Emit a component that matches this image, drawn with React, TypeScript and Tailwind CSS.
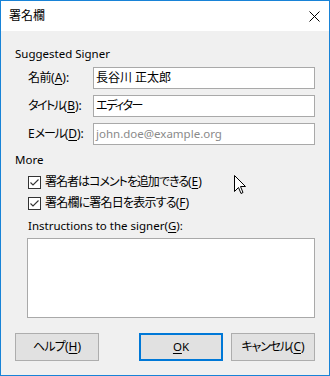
import React from "react";

const F = { fontFamily: '"Noto Sans", "Noto Sans CJK JP", sans-serif' };

function U({ c }: { c: string }) {
  return <span className="underline underline-offset-[2px]">{c}</span>;
}

function J({ children, t = "" }: { children: React.ReactNode; t?: string }) {
  return <span className={"[font-feature-settings:'palt'] " + t}>{children}</span>;
}

function Check() {
  return (
    <svg width="13" height="13" viewBox="0 0 13 13" className="shrink-0">
      <rect x="0.5" y="0.5" width="12" height="12" fill="#fff" stroke="#333" />
      <path d="M2.5 6.5 L5 9 L10.5 3.5" fill="none" stroke="#333" strokeWidth="1.1" />
    </svg>
  );
}

function Row({ label, children }: { label: React.ReactNode; children: React.ReactNode }) {
  return (
    <div className="flex items-center h-[22px]">
      <div className="w-[78px] pl-[13px] text-[12px] whitespace-nowrap text-black">{label}</div>
      {children}
    </div>
  );
}

export default function App() {
  return (
    <div
      className="w-[330px] h-[376px] border border-[#1883d7] bg-[#f0f0f0] flex flex-col relative text-[12px] leading-[16px] text-black"
      style={F}
    >
      <div className="h-[30px] bg-white flex items-center justify-between pl-[8px] pr-[9px] shrink-0">
        <span className="text-[12px] text-black">署名欄</span>
        <svg width="11" height="11" viewBox="0 0 11 11">
          <path d="M0.5 0.5 L10.5 10.5 M10.5 0.5 L0.5 10.5" stroke="#000" strokeWidth="1" />
        </svg>
      </div>
      <div className="flex flex-col pl-[14px] pr-[14px]">
        <div className="mt-[15px] h-[16px] text-[11.5px]">Suggested Signer</div>
        <div className="mt-[5px] flex flex-col gap-[6px]">
          <Row label={<><J t="tracking-[-0.5px]">名前</J>(<U c="A" />):</>}>
            <div className="w-[222px] h-[22px] bg-white border border-[#a9a9a9] flex items-center pl-[2px] text-[12px] whitespace-nowrap">
              <J>長谷川 正太郎</J>
            </div>
          </Row>
          <Row label={<><J t="tracking-[-1.5px]">タイトル</J>(<U c="B" />):</>}>
            <div className="w-[222px] h-[22px] bg-white border border-[#a9a9a9] flex items-center pl-[2px] text-[12px]">
              <J t="tracking-[-1.5px]">エディター</J>
            </div>
          </Row>
          <Row label={<>E<J t="tracking-[-1.2px]">メール</J>(<U c="D" />):</>}>
            <div className="w-[222px] h-[22px] bg-white border border-[#a9a9a9] flex items-center pl-[2px] text-[11.5px] text-[#8a8a8a]">
              john.doe@example.org
            </div>
          </Row>
        </div>
        <div className="mt-[7px] h-[16px] text-[11.5px]">More</div>
        <div className="mt-[6px] flex flex-col gap-[5px] pl-[13px]">
          <div className="flex items-center gap-[4px] h-[16px]">
            <Check />
            <span className="whitespace-nowrap">
              <J t="tracking-[-1px]">署名者はコメントを追加できる</J>(<U c="E" />)
            </span>
          </div>
          <div className="flex items-center gap-[4px] h-[16px]">
            <Check />
            <span className="whitespace-nowrap">
              <J t="tracking-[-0.8px]">署名欄に署名日を表示する</J>(<U c="F" />)
            </span>
          </div>
        </div>
        <div className="mt-[7px] h-[16px] pl-[13px] text-[11.5px] whitespace-nowrap">
          Instructions to the signer(<U c="G" />):
        </div>
        <div className="mt-[4px] ml-[12px] w-[288px] h-[80px] bg-white border border-[#a9a9a9]" />
        <div className="mt-[15px] flex items-center">
          <div className="w-[84px] h-[28px] bg-[#e1e1e1] border border-[#adadad] flex items-center justify-center whitespace-nowrap">
            <J t="tracking-[-0.8px]">ヘルプ</J>(<U c="H" />)
          </div>
          <div className="ml-[40px] w-[84px] h-[28px] bg-[#e1e1e1] border-2 border-[#0078d7] flex items-center justify-center text-[11.5px]">
            <U c="O" />K
          </div>
          <div className="ml-[8px] w-[84px] h-[28px] bg-[#e1e1e1] border border-[#adadad] flex items-center justify-center whitespace-nowrap">
            <J t="tracking-[-1.2px]">キャンセル</J>(<U c="C" />)
          </div>
        </div>
      </div>
      <svg
        className="absolute left-[233px] top-[174px]"
        width="13"
        height="21"
        viewBox="0 0 13 21"
      >
        <path
          d="M0.5 0.5 L0.5 16.5 L4.5 12.5 L7 18.5 L9 17.5 L6.5 11.5 L11.5 11.5 Z"
          fill="#fff"
          stroke="#000"
          strokeWidth="1"
          strokeLinejoin="miter"
        />
      </svg>
    </div>
  );
}
